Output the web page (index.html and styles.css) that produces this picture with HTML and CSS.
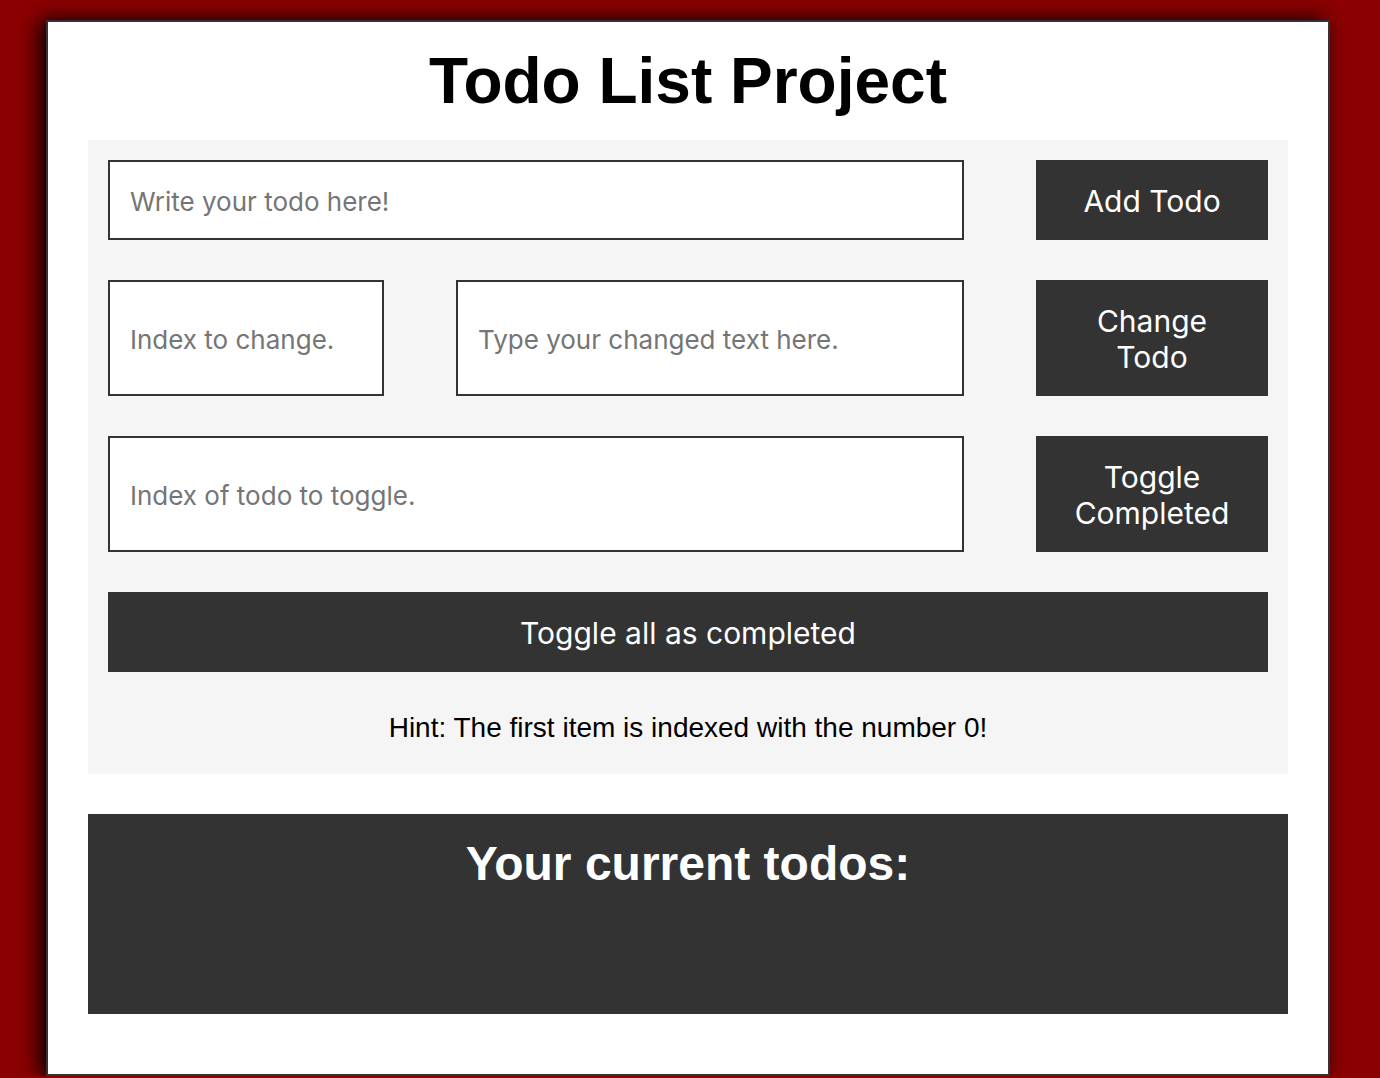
FILE: index.html
```html
<!DOCTYPE html>
<html lang="en">
<head>
<meta charset="utf-8">
<title>Todo List Project</title>
<link rel="stylesheet" href="styles.css">
</head>
<body>
<div class="page">
  <h1 class="title">Todo List Project</h1>
  <div class="panel">
    <div class="row row-short">
      <input class="field field-wide" type="text" placeholder="Write your todo here!">
      <button class="btn">Add Todo</button>
    </div>
    <div class="row row-tall">
      <div class="pair">
        <input class="field field-index" type="text" placeholder="Index to change.">
        <input class="field field-text" type="text" placeholder="Type your changed text here.">
      </div>
      <button class="btn">Change<br>Todo</button>
    </div>
    <div class="row row-tall">
      <input class="field field-wide" type="text" placeholder="Index of todo to toggle.">
      <button class="btn">Toggle<br>Completed</button>
    </div>
    <button class="btn btn-full">Toggle all as completed</button>
    <p class="hint">Hint: The first item is indexed with the number 0!</p>
  </div>
  <div class="todos">
    <h2 class="todos-title">Your current todos:</h2>
  </div>
</div>
</body>
</html>
```
FILE: styles.css
```css
html, body {
  margin: 0;
  padding: 0;
}
body {
  background: #8b0000;
  font-family: "Liberation Sans", Arial, sans-serif;
  overflow: hidden;
}
.page {
  width: 1200px;
  margin: 20px 0 0 46px;
  padding: 0 40px 60px;
  background: #fff;
  border: 2px solid #333;
  box-shadow: -6px 0 20px #000;
}
.title {
  margin: 0;
  height: 118px;
  line-height: 118px;
  text-align: center;
  font-size: 64px;
  font-weight: bold;
  color: #000;
}
.panel {
  background: #f5f5f5;
  padding: 20px 20px 0;
  display: flex;
  flex-direction: column;
  gap: 40px;
}
.row {
  display: flex;
  justify-content: space-between;
}
.row-short { height: 80px; }
.row-tall { height: 116px; }
.pair {
  width: 856px;
  display: flex;
  justify-content: space-between;
}
.field {
  box-sizing: border-box;
  height: 100%;
  border: 2px solid #333;
  background: #fff;
  padding: 2px 20px 0;
  font-family: Inter, "Noto Sans", sans-serif;
  font-size: 26px;
  color: #333;
  outline: none;
}
.field::placeholder { color: #757575; }
.field-wide { width: 856px; }
.field-index { width: 276px; }
.field-text { width: 508px; }
.btn {
  box-sizing: border-box;
  width: 232px;
  height: 100%;
  border: 0;
  background: #333;
  color: #fff;
  font-family: Inter, "Noto Sans", sans-serif;
  font-size: 30px;
  line-height: 36px;
  padding: 2px 0 0;
}
.btn-full {
  width: 100%;
  height: 80px;
}
.hint {
  margin: 0;
  padding-top: 1px;
  height: 61px;
  line-height: 30px;
  text-align: center;
  font-size: 28px;
  color: #000;
}
.todos {
  margin-top: 40px;
  height: 200px;
  background: #333;
  padding-top: 20px;
  box-sizing: border-box;
}
.todos-title {
  margin: 0;
  text-align: center;
  color: #fff;
  font-size: 48px;
  line-height: 60px;
  font-weight: bold;
}
```
